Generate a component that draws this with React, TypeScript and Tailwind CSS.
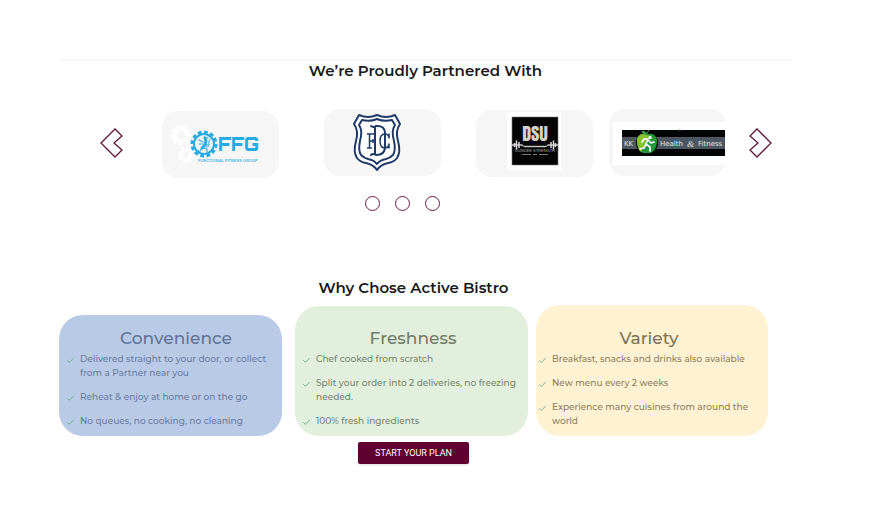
import { Check } from "lucide-react";

function Gear({ cx, cy, r, teeth, color, hole }: { cx: number; cy: number; r: number; teeth: number; color: string; hole: number }) {
  const band = r - hole;
  return (
    <g fill="none" stroke={color}>
      <circle cx={cx} cy={cy} r={hole + band / 2 - 1} strokeWidth={band - 2} />
      <circle
        cx={cx}
        cy={cy}
        r={r - 1}
        strokeWidth={3}
        pathLength={teeth * 2}
        strokeDasharray="1.2 0.8"
      />
    </g>
  );
}

function FfgLogo() {
  return (
    <svg viewBox="0 0 117 67" className="h-full w-full" role="img" aria-label="FFG Functional Fitness Group">
      <Gear cx={19} cy={24} r={10} teeth={9} color="#ffffff" hole={4} />
      <Gear cx={24} cy={44} r={8} teeth={8} color="#ffffff" hole={3} />
      <circle cx={42} cy={33} r={13} fill="#f6f6f6" />
      <Gear cx={42} cy={33} r={13} teeth={12} color="#29abe2" hole={9} />
      <g fill="none" stroke="#29abe2" strokeLinecap="round" strokeLinejoin="round">
        <path d="M43 27l1 3-1 4-3 3" strokeWidth="3" />
        <path d="M42 26l4 1M41 31l-4-2M41 33l-4 0M40 37l-2 3h-2M41 37l4 1v3M43 33l3 1" strokeWidth="1.2" />
        <path d="M44 36q4 0 3-3t1-5" strokeWidth="1" />
      </g>
      <text x="56" y="40" fontSize="18" fontWeight="900" fill="#29abe2" fontFamily="Orbitron, DejaVu Sans, sans-serif">FFG</text>
      <text x="36" y="51" fontSize="4" fontWeight="700" fill="#4db9e8" fontFamily="Liberation Sans, sans-serif">FUNCTIONAL FITNESS GROUP</text>
    </svg>
  );
}

function DundeeLogo() {
  return (
    <svg viewBox="0 0 117 67" className="h-full w-full" role="img" aria-label="Dundee FC">
      <g fill="#ffffff" stroke="#1f3a66" strokeLinejoin="round">
        <path
          d="M35 6q9 4 18 0q9 4 18 0l5 9q-5 7-2 17q3 11-1 17q-3 4-9 5q-8 2-11 7q-3-5-11-7q-6-1-9-5q-4-6-1-17q3-10-2-17z"
          strokeWidth="2"
        />
        <path
          d="M38 11q8 2 15-1q7 3 15 1l3 5q-4 6-1 16q2 9-1 14q-3 3-7 4q-6 1-9 5q-3-4-9-5q-4-1-7-4q-3-5-1-14q3-10-1-16z"
          strokeWidth="2"
        />
      </g>
      <g fill="none" stroke="#1f3a66" strokeLinecap="round">
        <path d="M47 17q3 2 5 0q9-1 9 8v13q0 8-9 8q-3-2-5 0M51 18v27" strokeWidth="2" />
        <path d="M43.500 25h7M45.500 25v14M43.500 39h4M45.500 32h4M49 30.500v3" strokeWidth="1.500" />
        <path d="M65 28q-1-3-4-3q-5 0-5 7t5 7q3 0 4-3M65 25v4M65 35v4" strokeWidth="1.500" />
      </g>
    </svg>
  );
}

function DsuLogo() {
  return (
    <svg viewBox="0 0 117 67" className="h-full w-full" role="img" aria-label="DSU Dundee Strength">
      <rect x="31" y="2" width="54" height="58" fill="#ffffff" />
      <rect x="36" y="7" width="46" height="48" fill="#050505" stroke="#777777" strokeWidth="0.6" />
      <text x="59" y="31" textAnchor="middle" fontSize="18" fill="#d2d2d2" fontFamily="Anton, Oswald, Liberation Sans, sans-serif">DSU</text>
      <path d="M36 35h10q1 1.500 3 1.500h20q2 0 3-1.500h10" stroke="#c4c4c4" strokeWidth="1.3" fill="none" />
      <path d="M38.500 33v4M40.500 30.500v9M43 32v6M75 32v6M77.500 30.500v9M79.500 33v4" stroke="#dcdcdc" strokeWidth="1.5" />
      <text x="59" y="42" textAnchor="middle" fontSize="4" fill="#aaaaaa" fontFamily="Liberation Sans, sans-serif">DUNDEE STRENGTH</text>
      <path d="M46 44.500h9M57 44.500h4M63 44.500h9" stroke="#777777" strokeWidth="1" />
    </svg>
  );
}

function KkLogo() {
  return (
    <svg viewBox="0 0 117 67" className="h-full w-full" role="img" aria-label="KK Health and Fitness">
      <rect x="4" y="13" width="113" height="43" fill="#ffffff" />
      <rect x="13" y="21" width="103" height="26" fill="#030405" />
      <rect x="13" y="28" width="103" height="12" fill="#4c5660" />
      <circle cx="38" cy="34" r="11" fill="#050805" />
      <path d="M38 26c4-3 10 0 10 6c0 7-4 12-7 12c-2 0-4 0-6 0c-4 0-7-5-7-12c0-6 6-9 10-6z" fill="#23963c" />
      <path d="M38 26c-4-3-10 0-10 6c0 5 2 9 4 11l8-17z" fill="#86c32f" />
      <path d="M38 26q-1-4-5-4q1 4 5 4q0-3 2-5" fill="#3aa544" stroke="#3aa544" strokeWidth="0.8" />
      <circle cx="41" cy="28.500" r="1.700" fill="#ffffff" />
      <path d="M35 30l4 0-2 5 4 3 0 4M37 35l-2 4-4 1M39 31l3 3 3-1M35 30l-2 3" fill="none" stroke="#ffffff" strokeWidth="1.700" strokeLinecap="round" strokeLinejoin="round" />
      <g fill="#e3e6e8" fontFamily="DejaVu Sans, sans-serif" fontSize="7">
        <text x="15" y="37">KK</text>
        <text x="51" y="37">Health</text>
        <text x="78" y="38" fontSize="9" fontStyle="italic" fontFamily="Liberation Serif, serif">&amp;</text>
        <text x="89" y="37">Fitness</text>
      </g>
      <path d="M69 21h3" stroke="#3aa544" strokeWidth="0.6" />
    </svg>
  );
}

const partners = [
  { name: "FFG", Logo: FfgLogo, place: "col-start-4 mt-0.5" },
  { name: "Dundee FC", Logo: DundeeLogo, place: "col-start-6" },
  { name: "DSU", Logo: DsuLogo, place: "col-start-8 mt-px" },
  { name: "KK", Logo: KkLogo, place: "col-start-10" },
];

const reasons = [
  {
    title: "Convenience",
    card: "mr-[13px] bg-[#b9cae7] pt-[11px] pl-[7px] text-[#6a7d9f]",
    heading: "pl-1 text-[#5f7397]",
    items: ["Delivered straight to your door, or collect from a Partner near you", "Reheat & enjoy at home or on the go", "No queues, no cooking, no cleaning"],
  },
  {
    title: "Freshness",
    card: "mr-2 bg-[#e2efdc] pt-5 pl-[7px] text-[#788673]",
    heading: "pr-1 text-[#6f7d6a]",
    items: ["Chef cooked from scratch", "Split your order into 2 deliveries, no freezing needed.", "100% fresh ingredients"],
  },
  {
    title: "Variety",
    card: "bg-[#fff2d2] pt-[21px] pl-0.5 text-[#8a7f63]",
    heading: "pr-2 text-[#807355]",
    items: ["Breakfast, snacks and drinks also available", "New menu every 2 weeks", "Experience many cuisines from around the world"],
  },
];

function Arrow({ flipped = false }: { flipped?: boolean }) {
  return (
    <svg viewBox="0 0 24 30" className={flipped ? "h-[30px] w-6 rotate-180" : "h-[30px] w-6"} fill="none" stroke="#5e1436" strokeWidth="1.300" aria-hidden="true">
      <path d="M15 1L1 15L15 29L22 22L14 15L22 8Z" />
    </svg>
  );
}

export default function App() {
  return (
    <main className="min-h-screen bg-white pt-[59px] pr-[94px] pb-16 pl-[59px] font-['Montserrat','Inter',sans-serif] text-[#191919]">
      <section>
        <hr className="h-0.5 border-0 bg-[#f8f8f8]" />
        <h2 className="text-center text-[15px] leading-5 font-semibold">We’re Proudly Partnered With</h2>
        <div className="mt-7 grid grid-cols-[41fr_24px_38fr_117px_45fr_117px_35fr_117px_16fr_117px_22fr_24px_20fr] items-start">
          <button type="button" aria-label="Previous partners" className="col-start-2 row-start-1 mt-[19px]">
            <Arrow />
          </button>
          {partners.map(({ name, Logo, place }) => (
            <div key={name} className={`row-start-1 h-[67px] overflow-hidden rounded-2xl bg-[#f6f6f6] ${place}`}>
              <Logo />
            </div>
          ))}
          <button type="button" aria-label="Next partners" className="col-start-12 row-start-1 mt-[19px]">
            <Arrow flipped />
          </button>
        </div>
        <div className="mt-[18px] flex justify-center gap-[15px] pr-[47px]">
          {[1, 2, 3].map((page) => (
            <button key={page} type="button" aria-label={`Page ${page}`} className="size-[15px] rounded-full border border-[#6b1d40]" />
          ))}
        </div>
      </section>

      <section className="mt-[66px] pr-6">
        <h2 className="text-center text-[15px] leading-[22px] font-semibold">Why Chose Active Bistro</h2>
        <div className="mt-1.5 grid grid-cols-[236fr_241fr_232fr] items-end">
          {reasons.map(({ title, card, heading, items }) => (
            <article key={title} className={`rounded-3xl pb-2 ${card}`}>
              <h3 className={`mb-0.5 text-center text-[17px] leading-6 font-medium ${heading}`}>{title}</h3>
              <ul className="flex flex-col gap-2.5 text-[9px] leading-[14px] font-medium">
                {items.map((item) => (
                  <li key={item} className="flex gap-[5px]">
                    <Check className="mt-1 size-[9px] shrink-0 text-[#6fae91]" strokeWidth={2.5} aria-hidden="true" />
                    <span>{item}</span>
                  </li>
                ))}
              </ul>
            </article>
          ))}
        </div>
        <div className="mt-1.5 flex justify-center">
          <button type="button" className="h-[22px] rounded-xs bg-[#5f0030] px-[17px] font-['Roboto',sans-serif] text-[9px] leading-[22px] text-white shadow-sm">
            START YOUR PLAN
          </button>
        </div>
      </section>
    </main>
  );
}
